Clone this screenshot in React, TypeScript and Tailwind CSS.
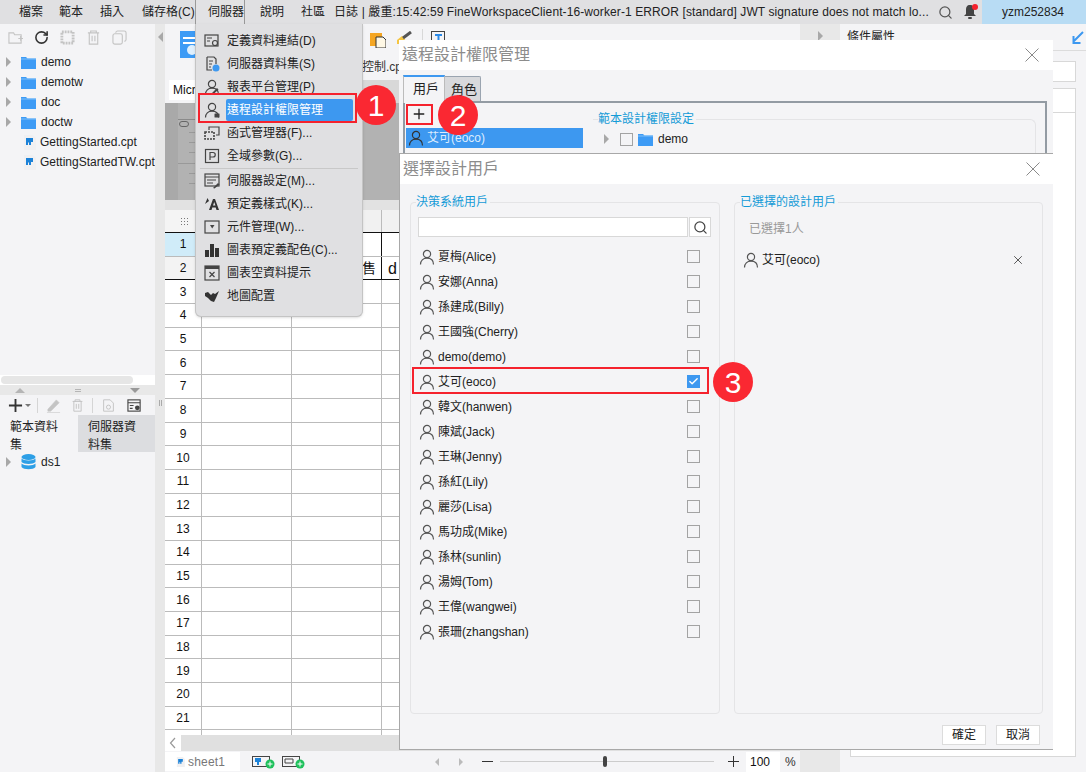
import React from 'react';
import { Check, RotateCw, Search, X } from 'lucide-react';

const stroke = { fill: 'none', stroke: 'currentColor', strokeWidth: 1.2 };

const Svg = ({ children, className = 'w-4 h-4 text-[#444]' }: { children: React.ReactNode; className?: string }) => (
  <svg viewBox="0 0 16 16" className={className + ' shrink-0'}>{children}</svg>
);

const UserIcon = ({ className = 'w-4 h-4 text-[#555]', lock = false, pen = false }: { className?: string; lock?: boolean; pen?: boolean }) => (
  <Svg className={className}>
    <circle cx="8" cy="5" r="3.6" {...stroke} />
    <path d="M1.5 15.5c0-4 2.6-6.3 6.5-6.3s6.5 2.3 6.5 6.3" {...stroke} />
    {lock && <rect x="10.5" y="11.5" width="5" height="4" rx="0.5" fill="currentColor" />}
    {pen && <path d="M7 15l6-6 1.5 1.5-6 5.5z" fill="currentColor" />}
  </Svg>
);

const CloseIcon = () => (
  <svg viewBox="0 0 14 14" className="w-[14px] h-[14px] shrink-0">
    <path d="M0.500 0.500l13 13M13.500 0.500l-13 13" fill="none" stroke="#8a8a8a" />
  </svg>
);

const FolderIcon = () => (
  <svg viewBox="0 0 15 13" className="w-[15px] h-[13px] shrink-0">
    <path d="M0 1h5l1.500 1.500H15V13H0z" fill="#3d9bf5" />
    <rect x="0" y="2.500" width="15" height="1" fill="#7fc0fa" />
  </svg>
);

const CptIcon = ({ className = 'w-[13px] h-[15px]' }: { className?: string }) => (
  <svg viewBox="0 0 13 15" className={className + ' shrink-0'}>
    <path d="M1 0h9l3 3v12H1z" fill="#f0f0f2" />
    <path d="M3 3h7v4H8v3H6V7.500H5V10H3z" fill="#1c82d8" />
  </svg>
);

const CheckBox = ({ checked = false }: { checked?: boolean }) =>
  checked ? (
    <span className="w-[13px] h-[13px] bg-[#3d98f0] flex items-center justify-center">
      <Check className="w-[11px] h-[11px] text-white" strokeWidth={3} />
    </span>
  ) : (
    <span className="block w-[13px] h-[13px] border border-[#a3a3a3]" />
  );

const Badge = ({ n, className }: { n: number; className: string }) => (
  <div className={'absolute w-10 h-10 rounded-full bg-[#fa2832] text-white text-[30px] flex items-center justify-center ' + className}>{n}</div>
);

const MenuBar = () => (
  <div className="h-6 shrink-0 bg-[#e0e0e2] flex items-center text-[12px] text-[#222]">
    <span className="ml-[19px] w-[40px]">檔案</span>
    <span className="w-[41px]">範本</span>
    <span className="w-[42px]">插入</span>
    <span className="w-[53px] whitespace-nowrap">儲存格(C)</span>
    <span className="w-[50px] h-6 pl-[12px] leading-6 whitespace-nowrap bg-[#e2e2e4] border-x border-[#999]">伺服器</span>
    <span className="ml-[15px] w-[41px]">說明</span>
    <span className="w-[33px]">社區</span>
    <span className="w-[596px] truncate tracking-[0.1px]">日誌 | 嚴重:15:42:59 FineWorkspaceClient-16-worker-1 ERROR [standard] JWT signature does not match lo...</span>
    <Search className="ml-[8px] w-[15px] h-[15px] text-[#555]" />
    <div className="relative ml-[10px] w-[14px] h-[16px]">
      <svg viewBox="0 0 14 16" className="w-[14px] h-[16px]">
        <path d="M7 1c3 0 4 2 4 5v4l2 2H1l2-2V6c0-3 1-5 4-5z" fill="#444" />
        <rect x="5" y="13" width="4" height="2" rx="1" fill="#444" />
      </svg>
      <span className="absolute right-[-1px] top-0 w-[6px] h-[6px] rounded-full bg-[#f5222d]" />
    </div>
    <div className="ml-[5px] flex-1 h-6 bg-[#b8dcf4] flex items-center pl-[20px]">yzm252834</div>
  </div>
);

const treeItems = ['demo', 'demotw', 'doc', 'doctw'];

const LeftPanel = () => (
  <div className="w-[155px] shrink-0 bg-[#f4f4f6] flex flex-col text-[12px] text-[#222]">
    <div className="h-[27px] flex items-center pl-[8px] gap-[11px] text-[#c4c4c4]">
      <Svg className="w-[15px] h-[15px]"><path d="M1 3h5l1 2h7v9H1z" {...stroke} /><path d="M11 9h5M13.500 6.500v5" {...stroke} /></Svg>
      <RotateCw className="w-[15px] h-[15px] text-[#333]" strokeWidth={2.5} />
      <Svg className="w-[15px] h-[15px]"><rect x="2" y="2" width="12" height="12" fill="none" stroke="currentColor" strokeWidth="3" strokeDasharray="2 1" /></Svg>
      <Svg className="w-[15px] h-[15px]"><path d="M2 3h12M5 3V1h6v2M3.500 3v12h9V3M6.500 6v6M9.500 6v6" {...stroke} /></Svg>
      <Svg className="w-[15px] h-[15px]"><rect x="1" y="4" width="10" height="11" rx="2" {...stroke} /><path d="M4 3c0-1 1-2 2-2h7c1 0 2 1 2 2v7c0 1-1 2-2 2" {...stroke} /></Svg>
    </div>
    <div className="pt-[1px] flex flex-col">
      {treeItems.map((t) => (
        <div key={t} className="h-5 flex items-center pl-[6px]">
          <span className="w-0 h-0 border-y-[5px] border-y-transparent border-l-[5px] border-l-[#a8a8a8]" />
          <span className="ml-[10px]"><FolderIcon /></span>
          <span className="ml-[5px]">{t}</span>
        </div>
      ))}
      {['GettingStarted.cpt', 'GettingStartedTW.cpt'].map((t) => (
        <div key={t} className="h-5 flex items-center pl-[23px]">
          <CptIcon />
          <span className="ml-[4px] whitespace-nowrap">{t}</span>
        </div>
      ))}
    </div>
    <div className="flex-1" />
    <div className="h-[10px] bg-white flex items-center pl-[1px]"><div className="w-[132px] h-2 rounded bg-[#e6e6e6]" /></div>
    <div className="h-[10px] bg-[#e8e8e8] flex items-center justify-between pl-[15px] pr-[15px]">
      <span className="w-0 h-0 border-x-[5px] border-x-transparent border-b-[5px] border-b-[#b5b5b5]" />
      <span className="w-[6px] h-[3px] border-y border-[#b5b5b5]" />
      <span className="w-0 h-0 border-x-[5px] border-x-transparent border-t-[5px] border-t-[#999]" />
    </div>
    <div className="h-[20px] flex items-center pl-[8px] text-[#c4c4c4]">
      <Svg className="w-[15px] h-[15px] text-[#333]"><path d="M8 1v14M1 8h14" fill="none" stroke="currentColor" strokeWidth="2" /></Svg>
      <span className="ml-[2px] w-0 h-0 border-x-[3px] border-x-transparent border-t-[3px] border-t-[#777]" />
      <span className="ml-[6px] w-px h-[15px] bg-[#d5d5d5]" />
      <Svg className="ml-[8px] w-[15px] h-[15px]"><path d="M2 12L11 2l3 3-9 9H2zM1 15.500h14" fill="currentColor" stroke="currentColor" strokeWidth="0.600" /></Svg>
      <Svg className="ml-[10px] w-[13px] h-[15px]"><path d="M2 3h12M5 3V1h6v2M3.500 3v12h9V3M6.500 6v6M9.500 6v6" {...stroke} /></Svg>
      <span className="ml-[8px] w-px h-[15px] bg-[#d5d5d5]" />
      <Svg className="ml-[9px] w-[13px] h-[15px]"><path d="M2 1h8l4 4v10H2z" {...stroke} /><circle cx="8" cy="10" r="2.500" {...stroke} /></Svg>
      <Svg className="ml-[12px] w-[15px] h-[15px] text-[#444]"><rect x="1" y="2" width="13" height="12" {...stroke} /><path d="M1 5h13M3 8h4M3 11h3" {...stroke} /><circle cx="11" cy="10.500" r="2.500" fill="currentColor" /></Svg>
    </div>
    <div className="h-[37px] flex leading-[18px]">
      <div className="w-[78px] pl-[10px] pr-[18px] pt-[3px]">範本資料集</div>
      <div className="w-[77px] pl-[10px] pr-[14px] pt-[3px] bg-[#dcdde0]">伺服器資料集</div>
    </div>
    <div className="h-[320px] flex items-start pl-[6px]">
      <div className="h-5 flex items-center">
        <span className="w-0 h-0 border-y-[5px] border-y-transparent border-l-[5px] border-l-[#a8a8a8]" />
        <svg viewBox="0 0 15 16" className="ml-[10px] w-[15px] h-4">
          <ellipse cx="7.500" cy="3" rx="7" ry="3" fill="#2d9fe6" />
          <path d="M0.500 4.500c2 2.500 12 2.500 14 0V8c-2 2.500-12 2.500-14 0zM0.500 9.500c2 2.500 12 2.500 14 0V13c-2 3-12 3-14 0z" fill="#2d9fe6" />
        </svg>
        <span className="ml-[5px]">ds1</span>
      </div>
    </div>
  </div>
);

const rows = Array.from({ length: 22 }, (_, i) => i + 1);

const Sheet = () => (
  <div className="flex-1 bg-white overflow-hidden text-[#111]">
    {rows.map((n) => (
      <div key={n} className={'h-[23.7px] flex border-b box-border ' + (n === 2 ? 'border-[#111]' : 'border-[#bbbbbb]')}>
        <div className={'w-[37px] shrink-0 border-r border-[#bbbbbb] flex items-center justify-center text-[12px] ' + (n === 1 ? 'bg-[#d0ecf9]' : n === 2 ? 'bg-[#f3f3f3]' : '')}>{n < 22 ? n : ''}</div>
        <div className="w-[90px] border-r border-[#bbbbbb]" />
        <div className={'w-[90px] border-r flex items-center justify-end pr-[5px] text-[14px] ' + (n <= 2 ? 'border-[#111]' : 'border-[#bbbbbb]')}>{n === 2 ? '售' : ''}</div>
        <div className="pl-[6px] text-[16px] leading-[23px]">{n === 2 ? 'd' : ''}</div>
      </div>
    ))}
  </div>
);

const CenterPanel = () => (
  <div className="w-[635px] shrink-0 flex flex-col bg-[#f4f4f6] text-[12px]">
    <div className="h-[56px] flex pl-[15px] pt-[7px]">
      <svg viewBox="0 0 18 30" className="w-[18px] h-[30px]">
        <rect width="18" height="27" fill="#3d9bf5" />
        <rect x="3" y="6" width="12" height="2" fill="#fff" />
        <rect x="3" y="11" width="12" height="2" fill="#fff" />
        <circle cx="12" cy="19" r="5" fill="#dff0fe" />
      </svg>
      <div className="ml-[172px] flex flex-col">
        <div className="flex items-center h-[22px] -mt-[3px]">
          <svg viewBox="0 0 16 17" className="w-4 h-[17px]"><rect y="2" width="12" height="13" fill="#f5a623" /><path d="M6 6h7l3 3v8H6z" fill="#fff8e5" stroke="#333" /></svg>
          <svg viewBox="0 0 16 17" className="ml-[11px] w-4 h-[17px]"><path d="M0 9l5-4 4 5-4 3H0z" fill="#f5c542" /><path d="M6 7l8-6" stroke="#555" strokeWidth="3" /></svg>
          <span className="ml-[9px] w-px h-[20px] bg-[#d8d8d8]" />
          <svg viewBox="0 0 16 17" className="ml-[8px] w-4 h-[17px]"><rect x="0.500" y="0.500" width="13" height="15" fill="none" stroke="#444" /><path d="M4 4h7M7.500 4v9" stroke="#2b8ae8" strokeWidth="2" /></svg>
        </div>
        <span className="-ml-[8px] mt-[8px] whitespace-nowrap text-[#333]">控制.cpt</span>
      </div>
    </div>
    <div className="h-[23px] pl-[4px] flex">
      <div className="w-[60px] h-5 bg-white pl-[4px] leading-5 text-[#111]">Micr</div>
      <div className="ml-[133px] flex-1 bg-[#d8d8d8]" />
    </div>
    <div className="h-[97px] bg-[#a9a9a9] pl-[13px] flex">
      <svg viewBox="0 0 30 97" className="w-[30px] h-[97px] shrink-0">
        <rect width="30" height="97" fill="#b2b2b2" />
        <path d="M0 16.500h30" stroke="#8a8a8a" />
        <rect x="1.500" y="18.500" width="9" height="5" rx="2.500" fill="none" stroke="#666" />
        <path d="M11 29.500h8M11 39.500h8M11 49.500h8M0 60.500h19M11 70.500h8M11 80.500h8" stroke="#999" />
      </svg>
      <div className="flex-1 bg-[#b2b2b2]" />
    </div>
    <div className="h-[10px] bg-[#e2e2e2]" />
    <div className="h-[23px] bg-[#f1f1f1] flex border-b border-[#111]">
      <div className="w-[37px] border-r border-[#bbbbbb] flex items-center justify-center bg-[#f4f4f4] pl-[3px]">
        <span className="w-[9px] h-[9px] bg-[radial-gradient(#777_1px,transparent_1px)] bg-[length:3px_3px]" />
      </div>
      <div className="w-[90px] border-r border-[#bbbbbb]" />
      <div className="w-[90px] border-r border-[#bbbbbb]" />
    </div>
    <Sheet />
    <div className="h-[16px] shrink-0 flex">
      <div className="w-[16px] bg-white flex items-center justify-center text-[#999]">
        <svg viewBox="0 0 8 12" className="w-2 h-3"><path d="M6 1L1.500 6 6 11" {...stroke} /></svg>
      </div>
      <div className="flex-1 bg-[#e0e0e0]" />
    </div>
    <div className="h-[21px] shrink-0 flex items-center">
      <div className="w-[75px] h-[19px] shrink-0 bg-white flex items-center pl-[11px] text-[#777] tracking-[0.2px]">
        <CptIcon className="w-[9px] h-[10px]" />
        <span className="ml-[3px]">sheet1</span>
      </div>
      <svg viewBox="0 0 24 14" className="ml-[12px] w-6 h-[14px] shrink-0">
        <rect x="0.500" y="1.500" width="17" height="10" fill="none" stroke="#444" />
        <path d="M3 3h6v4H7v3H5V7H3z" fill="#1c82d8" />
        <circle cx="18" cy="9" r="4.500" fill="#1fc15c" />
        <path d="M15.500 9h5M18 6.500v5" stroke="#fff" />
      </svg>
      <svg viewBox="0 0 24 14" className="ml-[6px] w-6 h-[14px] shrink-0">
        <rect x="0.500" y="1.500" width="17" height="10" fill="none" stroke="#444" />
        <path d="M3 4h8M3 8h8M3 4v4M11 4v4" stroke="#444" />
        <circle cx="18" cy="9" r="4.500" fill="#1fc15c" />
        <path d="M15.500 9h5M18 6.500v5" stroke="#fff" />
      </svg>
      <span className="ml-[129px] w-0 h-0 border-y-[4px] border-y-transparent border-r-[4px] border-r-[#bbb]" />
      <span className="ml-[20px] w-0 h-0 border-y-[4px] border-y-transparent border-l-[4px] border-l-[#bbb]" />
      <span className="ml-[19px] w-[11px] h-px bg-[#333] shrink-0" />
      <div className="relative ml-[7px] w-[214px] h-px bg-[#cccccc] shrink-0"><span className="absolute left-[103px] -top-[5px] w-[4px] h-[11px] rounded bg-[#444]" /></div>
      <span className="ml-[14px] w-[11px] h-[11px] relative shrink-0">
        <span className="absolute left-0 top-[5px] w-[11px] h-px bg-[#333]" />
        <span className="absolute left-[5px] top-0 w-px h-[11px] bg-[#333]" />
      </span>
      <div className="ml-[7px] w-[34px] h-[20px] shrink-0 bg-white pl-[4px] leading-5 text-[#111]">100</div>
      <span className="ml-[5px] text-[#333]">%</span>
    </div>
  </div>
);

const RightPanel = () => (
  <div className="flex-1 flex bg-[#f4f4f6] text-[12px] text-[#222]">
    <div className="w-[40px] shrink-0 bg-[#e8e8e8] flex justify-center pt-[7px]">
      <span className="w-0 h-0 border-y-[5px] border-y-transparent border-l-[5px] border-l-[#a8a8a8]" />
    </div>
    <div className="flex-1 flex flex-col">
      <div className="h-[27px] border-b border-[#dcdcdc] flex items-center justify-between pl-[7px] pr-[2px] shrink-0">
        <span>條件屬性</span>
        <svg viewBox="0 0 12 13" className="w-3 h-[13px]"><path d="M11 1L2 10M1.500 5v7h7" fill="none" stroke="#3d98f0" strokeWidth="2" /></svg>
      </div>
      <div className="ml-[10px] mr-[10px] mt-[10px] h-[21px] bg-white border border-[#d8d8d8] shrink-0" />
      <div className="ml-[10px] mr-[10px] mt-[6px] h-[669px] bg-white border border-[#d8d8d8] shrink-0">
        <div className="h-6 border-b border-[#d8d8d8]" />
      </div>
    </div>
  </div>
);

const menuItems: { label: string; icon: React.ReactNode; sep?: boolean }[] = [
  { label: '定義資料連結(D)', icon: <Svg><rect x="1" y="2" width="13" height="11" {...stroke} /><path d="M3 5h5M3 8h3" {...stroke} /><circle cx="11" cy="10" r="2.500" {...stroke} /></Svg> },
  { label: '伺服器資料集(S)', icon: <Svg><path d="M3 1h7l2 2v5M3 1v13h5" {...stroke} /><path d="M5 5h4M5 8h3M5 11h2" {...stroke} /><ellipse cx="12" cy="12" rx="3.500" ry="3.500" fill="#3d98f0" /></Svg> },
  { label: '報表平台管理(P)', icon: <UserIcon className="w-4 h-4 text-[#444]" pen /> },
  { label: '遠程設計權限管理', icon: <UserIcon className="w-4 h-4 text-[#444]" lock /> },
  { label: '函式管理器(F)...', icon: <Svg><path d="M5 5V2h10v8h-3" {...stroke} /><rect x="1" y="7" width="9" height="7" fill="none" stroke="currentColor" strokeWidth="1.600" strokeDasharray="2 1" /></Svg> },
  { label: '全域參數(G)...', sep: true, icon: <Svg><rect x="1.500" y="1.500" width="13" height="13" {...stroke} /><path d="M6 12V4.500h3a2 2 0 010 4.500H6" {...stroke} /></Svg> },
  { label: '伺服器設定(M)...', icon: <Svg><rect x="1" y="1" width="14" height="12" {...stroke} /><path d="M1 4h14M3 7h9M3 10h6" {...stroke} /><path d="M9 15l5-5 1.500 1.500-5 4z" fill="currentColor" /></Svg> },
  { label: '預定義樣式(K)...', icon: <Svg className="w-4 h-4 text-[#333]"><path d="M1 8l2.500-6L5 5M5 14l4-11h2l4 11h-2.500l-.8-2.500H8.300L7.500 14zM9 9.500h2.500L10.200 6z" fill="currentColor" /></Svg> },
  { label: '元件管理(W)...', icon: <Svg><rect x="1" y="2" width="14" height="12" {...stroke} /><path d="M6 6h4.500L8.200 9.500z" fill="currentColor" /></Svg> },
  { label: '圖表預定義配色(C)...', icon: <Svg className="w-4 h-4 text-[#333]"><path d="M1 8h4v7H1zM6 2h4v13H6zM11 6h4v9h-4z" fill="currentColor" /></Svg> },
  { label: '圖表空資料提示', icon: <Svg><rect x="1" y="1" width="14" height="14" {...stroke} /><rect x="1" y="1" width="14" height="3" fill="currentColor" /><path d="M5.500 7l5 5M10.500 7l-5 5" {...stroke} /></Svg> },
  { label: '地圖配置', icon: <Svg className="w-4 h-4 text-[#333]"><path d="M1 5l3-1 3 3 2-2 2 1 4-3-3 7-2 4-3-1-3-3-3-2z" fill="currentColor" /></Svg> },
];

const ServerMenu = () => (
  <div className="absolute left-[195px] top-6 w-[168px] h-[293px] bg-[#e0e0e2] border border-t-0 border-[#c4c4c4] rounded-b-md shadow pt-[5px] text-[12px] text-[#222]">
    {menuItems.map((m) => {
      const active = m.label === '遠程設計權限管理';
      return (
        <React.Fragment key={m.label}>
          <div className="h-[23px] flex items-center pl-[8px]">
            {m.icon}
            {active ? (
              <span className="ml-[6px] w-[127px] h-[22px] pl-[1px] rounded-[2px] bg-[#3d98f0] text-white leading-[22px]">{m.label}</span>
            ) : (
              <span className="ml-[7px] whitespace-nowrap">{m.label}</span>
            )}
          </div>
          {m.sep && <div className="mx-[4px] h-px bg-[#c8c8c8] mt-px" />}
        </React.Fragment>
      );
    })}
  </div>
);

const PermissionDialog = () => (
  <div className="absolute left-[399px] top-10 w-[654px] h-[115px] bg-[#f4f4f6] text-[12px] text-[#222]">
    <div className="h-[30px] bg-white flex items-center justify-between pl-[3px] pr-[14px]">
      <span className="text-[16px] text-[#8c8c8c]">遠程設計權限管理</span>
      <CloseIcon />
    </div>
    <div className="h-[4px]" />
    <div className="ml-[4px] flex items-end h-[27px]">
      <div className="w-[42px] h-[28px] bg-[#f4f4f6] border-t-[2px] border-x border-t-[#3d98f0] border-x-[#bbb] pl-[9px] leading-[24px] relative top-[2px] text-[13px]">用戶</div>
      <div className="w-[36px] h-[25px] bg-[#d8d9dc] border-t border-r border-[#9aa4b0] pl-[6px] leading-[26px] rounded-tr-[2px] text-[13px]">角色</div>
    </div>
    <div className="ml-[4px] w-[644px] h-[60px] border-2 border-b-0 border-[#939ba3] flex">
      <div className="w-[184px] shrink-0 pl-[1px] pt-[1px]">
        <div className="h-5 w-[26px] flex items-center justify-center">
          <Svg className="w-[14px] h-[14px] text-[#222]"><path d="M8 2v12M2 8h12" fill="none" stroke="currentColor" strokeWidth="1.500" /></Svg>
        </div>
        <div className="mt-[4px] h-5 w-[177px] bg-[#3d98f0] flex items-center pl-[2px] text-white">
          <UserIcon className="w-4 h-4 text-[#333]" />
          <span className="ml-[3px] text-[#dcecff]">艾可(eoco)</span>
        </div>
      </div>
      <fieldset className="ml-[4px] pl-[5px] mr-[9px] flex-1 border-l-0 border-t border-r border-[#e4e4e6] rounded-tr-md h-[46px] mt-[7px]">
        <legend className="text-[#149bd7] pr-[2px]">範本設計權限設定</legend>
        <div className="mt-[2px] ml-[6px] flex items-center">
          <span className="w-0 h-0 border-y-[5px] border-y-transparent border-l-[5px] border-l-[#a8a8a8]" />
          <span className="ml-[11px]"><CheckBox /></span>
          <span className="ml-[5px]"><FolderIcon /></span>
          <span className="ml-[5px]">demo</span>
        </div>
      </fieldset>
    </div>
  </div>
);

const users = ['夏梅(Alice)', '安娜(Anna)', '孫建成(Billy)', '王國強(Cherry)', 'demo(demo)', '艾可(eoco)', '韓文(hanwen)', '陳斌(Jack)', '王琳(Jenny)', '孫紅(Lily)', '麗莎(Lisa)', '馬功成(Mike)', '孫林(sunlin)', '湯姆(Tom)', '王偉(wangwei)', '張珊(zhangshan)'];

const SelectDialog = () => (
  <div className="absolute left-[399px] top-[153px] w-[654px] h-[597px] bg-[#f4f4f6] border-t border-b border-l border-[#a8a8a8] text-[12px] text-[#222]">
    <div className="h-[30px] bg-white flex items-center justify-between pl-[3px] pr-[13px]">
      <span className="text-[16px] text-[#8c8c8c]">選擇設計用戶</span>
      <CloseIcon />
    </div>
    <div className="flex pl-[10px] pt-[10px] gap-[14px]">
      <fieldset className="w-[310px] h-[520px] border border-[#e4e4e6] rounded-[4px] px-[7px]">
        <legend className="text-[#149bd7] ml-[-2px] pr-[2px] leading-[16px]">決策系統用戶</legend>
        <div className="mt-[7px] flex h-[20px] gap-px">
          <div className="w-[270px] bg-white border border-[#d8d8d8]" />
          <div className="w-[22px] bg-white border border-[#d8d8d8] flex items-center justify-center">
            <Search className="w-[15px] h-[15px] text-[#444]" />
          </div>
        </div>
        <div className="mt-[7px] flex flex-col">
          {users.map((u, i) => (
            <div key={u} className="h-[25px] flex items-center pl-[1px] pr-[12px]">
              <UserIcon />
              <span className="ml-[3px] flex-1">{u}</span>
              <CheckBox checked={i === 5} />
            </div>
          ))}
        </div>
      </fieldset>
      <fieldset className="w-[309px] h-[520px] border border-[#e4e4e6] rounded-[4px] px-[8px]">
        <legend className="text-[#149bd7] ml-[-3px] pr-[2px] leading-[16px]">已選擇的設計用戶</legend>
        <div className="pl-[6px] mt-[11px] leading-[16px] text-[#999]">已選擇1人</div>
        <div className="mt-[14px] flex items-center">
          <UserIcon />
          <span className="ml-[3px] flex-1">艾可(eoco)</span>
          <X className="w-[14px] h-[14px] mr-[9px] text-[#444]" strokeWidth={1.5} />
        </div>
      </fieldset>
    </div>
    <div className="flex justify-end gap-[10px] pr-[13px] mt-[11px]">
      <button className="w-[44px] h-5 bg-white border border-[#dcdcdc]">確定</button>
      <button className="w-[44px] h-5 bg-white border border-[#dcdcdc]">取消</button>
    </div>
  </div>
);

export default function App() {
  return (
    <div className="relative w-[1086px] h-[772px] overflow-hidden flex flex-col font-['Liberation_Sans','Noto_Sans_CJK_TC',sans-serif] bg-[#f4f4f6]">
      <MenuBar />
      <div className="flex-1 flex min-h-0">
        <LeftPanel />
        <div className="w-[10px] shrink-0 bg-[#e8e8e8] flex flex-col items-center pt-[8px]">
          <span className="w-0 h-0 border-y-[5px] border-y-transparent border-r-[5px] border-r-[#a8a8a8]" />
          <span className="mt-[358px] w-[3px] h-[6px] border-x border-[#aaa]" />
        </div>
        <CenterPanel />
        <RightPanel />
      </div>
      <ServerMenu />
      <PermissionDialog />
      <SelectDialog />
      {/* annotations */}
      <div className="absolute left-[198px] top-[93px] w-[159px] h-[30px] border-2 border-[#f5222d]" />
      <div className="absolute left-[406px] top-[104px] w-[27px] h-[21px] border-2 border-[#f5222d]" />
      <div className="absolute left-[412px] top-[367px] w-[297px] h-[27px] border-2 border-[#f5222d]" />
      <Badge n={1} className="left-[356px] top-[85px]" />
      <Badge n={2} className="left-[438px] top-[95px]" />
      <Badge n={3} className="left-[713px] top-[362px]" />
    </div>
  );
}
